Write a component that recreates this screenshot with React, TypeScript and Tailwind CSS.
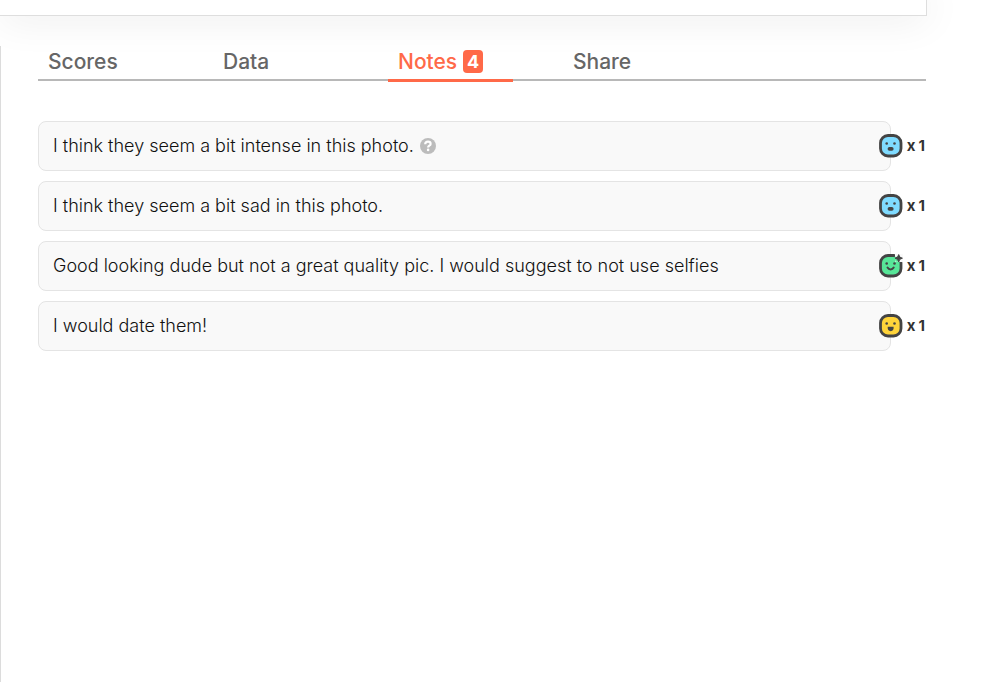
import { clsx } from "clsx";

type Mood = "sad" | "great" | "happy";

const tabs = [
    { name: "Scores" },
    { name: "Data" },
    { name: "Notes", count: 4, active: true },
    { name: "Share" },
];

const notes: { text: string; mood: Mood; votes: number; help?: boolean }[] = [
    { text: "I think they seem a bit intense in this photo.", mood: "sad", votes: 1, help: true },
    { text: "I think they seem a bit sad in this photo.", mood: "sad", votes: 1 },
    { text: "Good looking dude but not a great quality pic. I would suggest to not use selfies", mood: "great", votes: 1 },
    { text: "I would date them!", mood: "happy", votes: 1 },
];

const faceColors: Record<Mood, string> = {
    sad: "#7fdbff",
    great: "#57e698",
    happy: "#ffd43a",
};

function Face({ mood }: { mood: Mood }) {
    return (
        <svg width="24" height="24" viewBox="0 0 24 24" className="shrink-0" aria-hidden="true">
            <rect x="1.5" y="1.5" width="20.5" height="20.5" rx="7.5" fill={faceColors[mood]} stroke="#444" strokeWidth="2.8" />
            <circle cx="7.7" cy="9.5" r="1.3" fill="#444" />
            <circle cx="15.5" cy="9.5" r="1.3" fill="#444" />
            {mood === "sad" && <rect x="8.6" y="12.9" width="6" height="3.8" rx="1.8" fill="#444" />}
            {mood === "great" && (
                <>
                    <path d="M8.500 13.600c1.400 2.400 4.800 2.400 6.200 0" fill="none" stroke="#444" strokeWidth="2" strokeLinecap="round" />
                    <path d="M16 0h8v8h-8z" fill="#f9f9f9" />
                    <path d="M15.5 2.8h3l2 5h-4z" fill={faceColors.great} />
                    <path d="M19.700.6l1.100 2.500 2.600 1.100-2.600 1.100-1.100 2.600-1.100-2.600L16 4.200l2.600-1.100z" fill="#444" stroke="#444" />
                </>
            )}
            {mood === "happy" && <path d="M8.700 12.800h5.900c.4 2.700-.8 4.400-2.900 4.400s-3.400-1.700-3-4.400z" fill="#444" />}
        </svg>
    );
}

function HelpIcon() {
    return (
        <svg width="16" height="16" viewBox="0 0 16 16" aria-hidden="true">
            <circle cx="8" cy="8" r="8" fill="#bcbcbc" />
            <path d="M5.200 6.200c.1-1.700 1.200-2.500 2.800-2.500 1.500 0 2.600.8 2.600 2.200 0 1.900-2.500 1.700-2.500 3.500" fill="none" stroke="#fff" strokeWidth="2.200" />
            <circle cx="8.100" cy="11.900" r="1.300" fill="#fff" />
        </svg>
    );
}

export default function App() {
    return (
        <div className="flex min-h-screen flex-col bg-white pb-[7px] font-['Inter',sans-serif]">
            <header className="mr-[75px] h-4 border-r border-b border-[#dedede] bg-white shadow-[0_0_40px_rgba(0,0,0,0.12)]" />

            <main className="mt-[30px] flex-1 border-l border-[#dcdcdc] pr-[76px] pl-[37px]">
                <nav className="flex h-[35px] gap-[50px] border-b-2 border-[#b8b8b8]">
                    {tabs.map((tab) => (
                        <a
                            key={tab.name}
                            href={`#${tab.name.toLowerCase()}`}
                            className={clsx(
                                "flex h-9 w-[125px] items-center gap-1.5 border-b-3 px-2.5 pb-0.5 text-[21px] font-medium",
                                tab.active ? "border-[#ff6948] text-[#ff6948]" : "border-transparent text-[#666]"
                            )}
                        >
                            {tab.name}
                            {tab.count && (
                                <span className="flex h-[23px] w-5 items-center justify-center rounded-sm bg-[#ff6948] text-lg font-bold text-white">
                                    {tab.count}
                                </span>
                            )}
                        </a>
                    ))}
                </nav>

                <ul className="mt-10 flex flex-col gap-2.5">
                    {notes.map((note) => (
                        <li key={note.text} className="flex items-center">
                            <div className="flex flex-1 items-center gap-1.5 rounded-lg border border-[#e4e4e4] bg-[#f9f9f9] px-3.5 py-2.5 text-lg leading-7 font-light text-[#111]">
                                <p>{note.text}</p>
                                {note.help && (
                                    <button type="button" aria-label="Help">
                                        <HelpIcon />
                                    </button>
                                )}
                            </div>
                            <div className="relative -ml-3 flex items-center gap-1 pr-px text-[15px] font-bold text-[#333]">
                                <Face mood={note.mood} />
                                <span className="flex gap-[3px]">
                                    <span>x</span>
                                    <span>{note.votes}</span>
                                </span>
                            </div>
                        </li>
                    ))}
                </ul>
            </main>
        </div>
    );
}
